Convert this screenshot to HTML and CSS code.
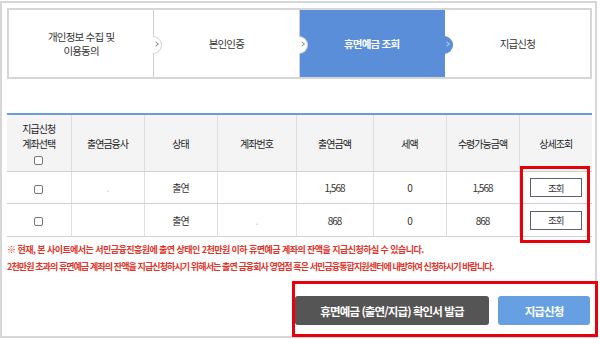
FILE: index.html
```html
<!DOCTYPE html>
<html lang="ko">
<head>
    <meta charset="UTF-8">
    <meta name="viewport" content="width=device-width, initial-scale=1.0">
    <title>휴면예금 조회</title>
    <link rel="stylesheet" href="styles.css">
</head>
<body>

    <div class="page">
        <!-- 단계 표시 -->
        <ol class="steps">
            <li class="step">개인정보 수집 및<br>이용동의</li>
            <li class="step">본인인증</li>
            <li class="step active">휴면예금 조회</li>
            <li class="step">지급신청</li>
        </ol>

        <!-- 조회 결과 -->
        <table class="result">
            <colgroup>
                <col style="width: 64px">
                <col style="width: 73px">
                <col style="width: 73px">
                <col style="width: 79px">
                <col style="width: 77px">
                <col style="width: 73px">
                <col style="width: 73px">
                <col style="width: 73px">
            </colgroup>
            <thead>
                <tr>
                    <th>지급신청<br>계좌선택<br><input type="checkbox" class="check"></th>
                    <th>출연금융사</th>
                    <th>상태</th>
                    <th>계좌번호</th>
                    <th>출연금액</th>
                    <th>세액</th>
                    <th>수령가능금액</th>
                    <th>상세조회</th>
                </tr>
            </thead>
            <tbody>
                <tr>
                    <td><input type="checkbox" class="check"></td>
                    <td class="blur">.</td>
                    <td>출연</td>
                    <td></td>
                    <td>1,568</td>
                    <td>0</td>
                    <td>1,568</td>
                    <td><button class="btn-view">조회</button></td>
                </tr>
                <tr>
                    <td><input type="checkbox" class="check"></td>
                    <td></td>
                    <td>출연</td>
                    <td class="blur">.</td>
                    <td>868</td>
                    <td>0</td>
                    <td>868</td>
                    <td><button class="btn-view">조회</button></td>
                </tr>
            </tbody>
        </table>

        <p class="notice">
            <span class="notice-first">※ 현재, 본 사이트에서는 서민금융진흥원에 출연 상태인 2천만원 이하 휴면예금 계좌의 잔액을 지급신청하실 수 있습니다.</span><br>
            2천만원 초과의 휴면예금 계좌의 잔액을 지급신청하시기 위해서는 출연 금융회사 영업점 혹은 서민금융통합지원센터에 내방하여 신청하시기 바랍니다.
        </p>

        <div class="actions">
            <button class="btn btn-dark">휴면예금 (출연/지급) 확인서 발급</button>
            <button class="btn btn-blue">지급신청</button>
        </div>

        <!-- 강조 표시 -->
        <div class="mark mark-view"></div>
        <div class="mark mark-actions"></div>
    </div>

</body>
</html>
```

FILE: styles.css
```css
body {
    margin: 0;
    font-family: "Noto Sans CJK KR", "Noto Sans", sans-serif;
    color: #333;
    background-color: #fff;
}
.page {
    position: relative;
    box-sizing: border-box;
    width: 597px;
    height: 337px;
    margin-top: 1px;
    padding: 5px 3px 0 5px;
    border: 2px solid #d6d6d6;
}
.steps {
    display: grid;
    grid-template-columns: repeat(4, 1fr);
    margin: 0;
    padding: 0;
    list-style: none;
    height: 71px;
    box-sizing: border-box;
    border: 2px solid #d6d6d6;
}
.step {
    position: relative;
    display: flex;
    align-items: center;
    justify-content: center;
    text-align: center;
    font-size: 10.5px;
    letter-spacing: -0.8px;
    line-height: 14px;
    border-right: 1px solid #cfcfcf;
}
.step:last-child {
    border-right: none;
}
.step:not(:last-child)::after {
    content: '';
    position: absolute;
    top: 50%;
    right: -9px;
    width: 8px;
    height: 16px;
    margin-top: -8px;
    background-color: #fff;
    border: 1px solid #cfcfcf;
    border-left: none;
    border-radius: 0 9px 9px 0;
    z-index: 2;
}
.step:not(:last-child)::before {
    content: '';
    position: absolute;
    top: 50%;
    right: -5px;
    width: 3px;
    height: 3px;
    margin-top: -2px;
    border-top: 1px solid #999;
    border-right: 1px solid #999;
    transform: rotate(45deg);
    z-index: 3;
}
.step.active {
    background-color: #5a8ed8;
    color: #fff;
    font-weight: bold;
    border-right-color: #5a8ed8;
}
.step.active::after {
    background-color: #5a8ed8;
    border-color: #5a8ed8;
}
.step.active::before {
    border-color: #a9c8f0;
}
.result {
    width: 585px;
    margin-top: 34px;
    border-collapse: collapse;
    table-layout: fixed;
    border-top: 2px solid #6b9bdb;
    font-size: 10px;
    letter-spacing: -1px;
}
.result th,
.result td {
    padding: 0;
    text-align: center;
    vertical-align: middle;
    border-left: 1px solid #dedede;
    border-bottom: 1px solid #cfcfcf;
}
.result th:first-child,
.result td:first-child {
    border-left: none;
}
.result th {
    height: 56px;
    background-color: #f4f4f4;
    font-weight: normal;
    color: #222;
    line-height: 15px;
}
.result tbody tr:first-child td {
    height: 31px;
}
.result tbody tr td {
    height: 32px;
}
.result .blur {
    color: #ccc;
}
.check {
    appearance: none;
    display: inline-block;
    width: 9px;
    height: 9px;
    margin: 2px 0 0;
    vertical-align: middle;
    border: 1px solid #777;
    border-radius: 2px;
    background-color: #fff;
}
td .check {
    margin: 0;
}
.btn-view {
    width: 52px;
    height: 19px;
    padding: 0;
    border: 1px solid #5c6170;
    background-color: #fff;
    font-family: inherit;
    font-size: 9.5px;
    letter-spacing: -1px;
    color: #333;
}
.notice {
    margin: 4px 0 0;
    font-size: 9px;
    letter-spacing: -0.9px;
    line-height: 17px;
    font-weight: bold;
    color: #e0352b;
}
.notice-first {
    letter-spacing: -0.55px;
}
.actions {
    display: flex;
    justify-content: flex-end;
    gap: 9px;
    margin-top: 21px;
    padding-right: 2px;
}
.btn {
    height: 29px;
    border: none;
    border-radius: 3px;
    font-family: inherit;
    font-size: 11.5px;
    letter-spacing: -0.9px;
    font-weight: bold;
    color: #fff;
}
.btn-dark {
    width: 194px;
    background-color: #555;
}
.btn-blue {
    width: 92px;
    background-color: #66a0e2;
}
.mark {
    position: absolute;
    border: 3px solid #e8000b;
    box-sizing: border-box;
}
.mark-view {
    left: 518px;
    top: 163px;
    width: 70px;
    height: 77px;
}
.mark-actions {
    left: 290px;
    top: 278px;
    width: 306px;
    height: 56px;
}
```
